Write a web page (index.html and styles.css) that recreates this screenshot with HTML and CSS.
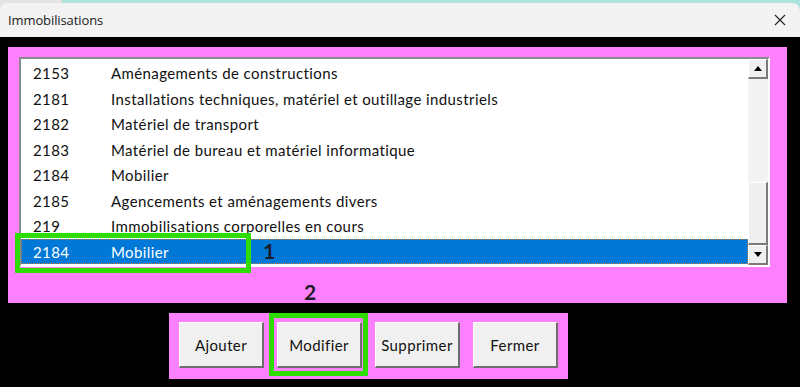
FILE: index.html
```html
<!DOCTYPE html>
<html lang="fr">
<head>
<meta charset="utf-8">
<title>Immobilisations</title>
<link rel="stylesheet" href="styles.css">
</head>
<body>
<div class="window">
  <div class="titlebar">
    <span class="title">Immobilisations</span>
    <svg class="close" width="12" height="12" viewBox="0 0 12 12"><path d="M1 1L11 11M11 1L1 11" stroke="#222" stroke-width="1.1" fill="none"/></svg>
  </div>
  <div class="client">
    <div class="panel">
      <div class="listbox">
        <div class="rows">
          <div class="row"><span class="code">2153</span><span class="lbl">Aménagements de constructions</span></div>
          <div class="row"><span class="code">2181</span><span class="lbl">Installations techniques, matériel et outillage industriels</span></div>
          <div class="row"><span class="code">2182</span><span class="lbl">Matériel de transport</span></div>
          <div class="row"><span class="code">2183</span><span class="lbl">Matériel de bureau et matériel informatique</span></div>
          <div class="row"><span class="code">2184</span><span class="lbl">Mobilier</span></div>
          <div class="row"><span class="code">2185</span><span class="lbl">Agencements et aménagements divers</span></div>
          <div class="row"><span class="code">219</span><span class="lbl">Immobilisations corporelles en cours</span></div>
          <div class="row selected"><span class="code">2184</span><span class="lbl">Mobilier</span></div>
        </div>
        <div class="scrollbar">
          <div class="sbtn"><svg width="8" height="5" viewBox="0 0 8 5"><path d="M0 5L4 0L8 5Z" fill="#000"/></svg></div>
          <div class="track"></div>
          <div class="thumb"></div>
          <div class="sbtn"><svg width="8" height="5" viewBox="0 0 8 5"><path d="M0 0L8 0L4 5Z" fill="#000"/></svg></div>
        </div>
      </div>
      <div class="mark mark-row"></div>
      <span class="num num1">1</span>
      <span class="num num2">2</span>
    </div>
    <div class="buttons">
      <button class="btn">Ajouter</button>
      <button class="btn">Modifier</button>
      <button class="btn">Supprimer</button>
      <button class="btn">Fermer</button>
      <div class="mark mark-btn"></div>
    </div>
  </div>
</div>
</body>
</html>
```

FILE: styles.css
```css
html, body {
  margin: 0;
  padding: 0;
}
body {
  width: 800px;
  height: 387px;
  overflow: hidden;
  background: #000;
  font-family: "Lato", "Open Sans", sans-serif;
}
.window {
  position: relative;
  height: 387px;
  display: flex;
  flex-direction: column;
  background: linear-gradient(to right, #e4e4e4 0, #e4e4e4 62px, #ade3df 62px, #ade3df 100%) top / 100% 10px no-repeat;
}
.titlebar {
  margin-top: 3px;
  height: 34px;
  background: #f3f3f3;
  border-radius: 8px 8px 0 0;
  display: flex;
  align-items: center;
  justify-content: space-between;
  padding: 0 14px 0 8px;
  flex-shrink: 0;
}
.title {
  font-family: "Open Sans", "Noto Sans", sans-serif;
  font-size: 13px;
  color: #1a1a1a;
  letter-spacing: -0.1px;
}
.close {
  display: block;
}
.client {
  flex: 1;
  background: #000;
  padding-top: 10px;
  display: flex;
  flex-direction: column;
}
.panel {
  position: relative;
  margin-left: 8px;
  width: 779px;
  height: 256px;
  box-sizing: border-box;
  background: #ff80ff;
  padding: 10px 17px 0 11px;
}
.listbox {
  height: 210px;
  box-sizing: border-box;
  background: #fff;
  border-top: 2px solid #8a8a8a;
  border-left: 2px solid #8a8a8a;
  border-right: 2px solid #fff;
  border-bottom: 2px solid #fff;
  display: flex;
}
.rows {
  flex: 1;
  padding-top: 1px;
  display: flex;
  flex-direction: column;
}
.row {
  height: 25.5px;
  display: flex;
  align-items: center;
  padding-top: 1px;
  box-sizing: border-box;
  font-size: 15px;
  letter-spacing: 0.4px;
  color: #111;
  flex-shrink: 0;
}
.row .code {
  width: 90px;
  padding-left: 12px;
  box-sizing: border-box;
}
.row.selected {
  background: #0078d7;
  color: #fff;
  outline: 1px dotted #b88050;
  outline-offset: -1px;
}
.scrollbar {
  width: 20px;
  display: flex;
  flex-direction: column;
  background: #fff;
}
.sbtn {
  height: 20px;
  box-sizing: border-box;
  background: #f0f0f0;
  border-top: 1px solid #fff;
  border-left: 1px solid #fff;
  border-right: 2px solid #7a7a7a;
  border-bottom: 2px solid #7a7a7a;
  display: flex;
  align-items: center;
  justify-content: center;
}
.track {
  height: 103px;
  background-color: #f6f6f6;
  background-image: repeating-conic-gradient(#ececec 0 25%, #fafafa 0 50%);
  background-size: 2px 2px;
}
.thumb {
  height: 63px;
  box-sizing: border-box;
  background: #efefef;
  border-top: 1px solid #fff;
  border-left: 1px solid #fff;
  border-right: 2px solid #7a7a7a;
  border-bottom: 2px solid #7a7a7a;
}
.mark {
  position: absolute;
  border: 5px solid #2fdc00;
  box-sizing: border-box;
}
.mark-row {
  left: 7px;
  top: 186px;
  width: 236px;
  height: 40px;
}
.num {
  position: absolute;
  font-family: "Lato", sans-serif;
  font-weight: 700;
  font-size: 21px;
  color: #1c1c2a;
  line-height: 1;
}
.num1 { left: 255px; top: 193px; }
.num2 { left: 296px; top: 234px; }
.buttons {
  position: relative;
  margin-left: 169px;
  margin-top: 10px;
  width: 399px;
  height: 66px;
  box-sizing: border-box;
  background: #ff80ff;
  padding: 9px 0 0 10px;
  display: flex;
  gap: 13px;
  align-items: flex-start;
}
.btn {
  width: 85px;
  height: 46px;
  box-sizing: border-box;
  background: #f0f0f0;
  border: none;
  border-top: 1px solid #fff;
  border-left: 1px solid #fff;
  border-right: 2px solid #6e6e6e;
  border-bottom: 2px solid #6e6e6e;
  font-family: "Lato", sans-serif;
  font-size: 15px;
  letter-spacing: 0.4px;
  color: #111;
  padding: 0;
}
.mark-btn {
  left: 100px;
  top: 0;
  width: 99px;
  height: 63px;
}
```
